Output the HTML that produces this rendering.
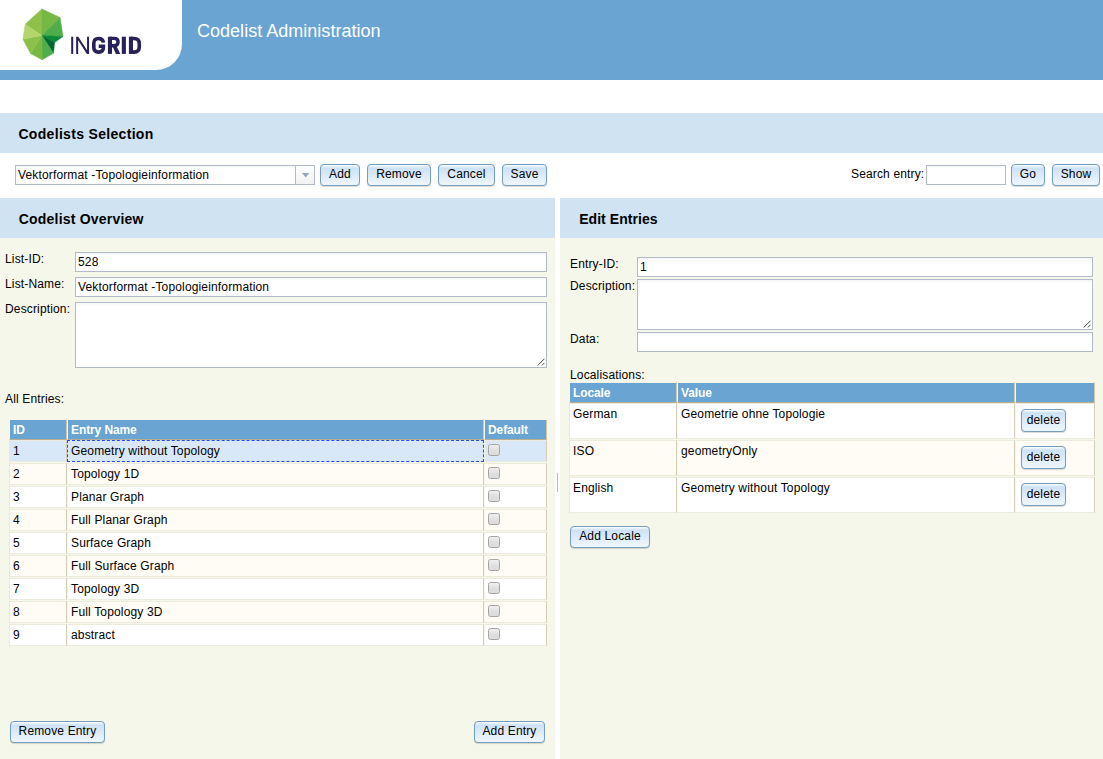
<!DOCTYPE html>
<html>
<head>
<meta charset="utf-8">
<title>Codelist Administration</title>
<style>
html,body{margin:0;padding:0;}
body{width:1103px;height:759px;overflow:hidden;background:#fff;position:relative;
  font-family:"Liberation Sans",sans-serif;font-size:12px;color:#000;line-height:14px;letter-spacing:.15px;}
.abs{position:absolute;}
.t{position:absolute;white-space:nowrap;line-height:14px;height:14px;}
#hdr{left:0;top:0;width:1103px;height:80px;background:#69a4d3;}
#logo{left:0;top:0;width:182px;height:70px;background:#fff;border-bottom-right-radius:26px;}
#title{left:197px;top:20px;letter-spacing:.02px;font-size:18px;line-height:22px;height:22px;color:#fff;}
.sec{position:absolute;background:#d0e3f2;height:40px;}
.sec span{position:absolute;left:18.4px;top:13px;font-weight:bold;font-size:14px;line-height:16px;letter-spacing:.32px;white-space:nowrap;}
.panel{position:absolute;background:#f5f7eb;}
.inp{position:absolute;box-sizing:border-box;border:1px solid #b3bac7;background:#fff linear-gradient(#f4f5f7 0,#fff 3px);
  padding:0 0 0 2px;line-height:18px;white-space:nowrap;overflow:hidden;}
.inp span{position:relative;top:0;}
.btn{position:absolute;box-sizing:border-box;height:22px;border:1px solid #759dc0;border-radius:4px;
  background:#bcd8f4 linear-gradient(#fff 0,rgba(255,255,255,.25) 3px,rgba(255,255,255,.78) 100%);
  box-shadow:0 1px 1px rgba(0,0,0,.15);text-align:center;line-height:14px;padding-top:2px;white-space:nowrap;}
/* grids */
.grid{position:absolute;}
.cell{position:absolute;box-sizing:border-box;border:1px solid;border-color:#ecebdc #d5cdb5 #ecebdc #f8f6ea;
  padding:3px 0 0 3px;line-height:14px;white-space:nowrap;overflow:hidden;}
.hc{background:#69a4d3;color:#fff;font-weight:bold;letter-spacing:-.1px;border-color:#fdf6e6 #d1c8ab #b9ae90 #fdf6e6;}
.row .cell:first-child{border-left-color:#e9e8d9;}
.row .hc:first-child{border-left-color:#fdf6e6;}
.r0 .cell{background:#fff;}
.r1 .cell{background:#fefcf4;}
.sel .cell{background:#d9e8f9;}
.row{position:absolute;left:0;}
.cb{position:absolute;left:3px;top:3px;width:12px;height:12px;box-sizing:border-box;border:1px solid #a4a4a4;border-radius:2.5px;
  background:linear-gradient(#efefef,#dedede 60%,#dcdcdc);box-shadow:0 0 1px rgba(255,255,255,.6);}
</style>
</head>
<body>
<!-- header -->
<div id="hdr" class="abs"></div>
<div id="logo" class="abs">
<svg class="abs" style="left:0;top:0" width="182" height="70" viewBox="0 0 182 70">
  <polygon points="25.2,24.2 41.8,8.9 41.8,35.5" fill="#8fc049" stroke="#8fc049" stroke-width="0.5" stroke-linejoin="round"/>
  <polygon points="41.8,8.9 60.1,17.5 41.8,35.5" fill="#75b843" stroke="#75b843" stroke-width="0.5" stroke-linejoin="round"/>
  <polygon points="60.1,17.5 63,36.4 41.8,35.5" fill="#50ae4a" stroke="#50ae4a" stroke-width="0.5" stroke-linejoin="round"/>
  <polygon points="63,36.4 54.6,42.6 41.8,35.5" fill="#0e8b3a" stroke="#0e8b3a" stroke-width="0.5" stroke-linejoin="round"/>
  <polygon points="54.6,42.6 53.4,53.3 41.8,35.5" fill="#00692f" stroke="#00692f" stroke-width="0.5" stroke-linejoin="round"/>
  <polygon points="53.4,53.3 42.1,59.8 41.8,35.5" fill="#50ae4a" stroke="#50ae4a" stroke-width="0.5" stroke-linejoin="round"/>
  <polygon points="42.1,59.8 30.5,53.5 41.8,35.5" fill="#79b943" stroke="#79b943" stroke-width="0.5" stroke-linejoin="round"/>
  <polygon points="30.5,53.5 22.9,39.2 41.8,35.5" fill="#8cc049" stroke="#8cc049" stroke-width="0.5" stroke-linejoin="round"/>
  <polygon points="22.9,39.2 25.2,24.2 41.8,35.5" fill="#b4d46d" stroke="#b4d46d" stroke-width="0.5" stroke-linejoin="round"/>
  <g fill="#29215a" stroke="none">
    <rect x="71.2" y="36.7" width="2" height="17.2"/>
    <polygon points="76.15,36.7 78.3,36.7 87.06,50.3 87.06,36.7 89.06,36.7 89.06,53.9 86.9,53.9 78.15,40.3 78.15,53.9 76.15,53.9"/>
    <rect x="107.9" y="36.7" width="4.1" height="17.2"/>
    <polygon points="112.6,46.2 116.6,46.2 120.3,53.9 115.9,53.9"/>
    <rect x="121.8" y="36.7" width="4.1" height="17.2"/>
    <rect x="128.9" y="36.7" width="4.1" height="17.2"/>
  </g>
  <g fill="none" stroke="#29215a" stroke-linejoin="miter">
    <path d="M103.4 42.6 C103.1 39.9 101.3 38.5 98.6 38.5 C95.5 38.5 93.8 40.4 93.8 43.3 L93.8 47.3 C93.8 50.2 95.5 52.1 98.6 52.1 C101.6 52.1 103.4 50.3 103.4 47.6 L103.4 46.2 L98.7 46.2" stroke-width="3.6"/>
    <path d="M110 38.4 L114 38.4 C116.8 38.4 118.1 39.9 118.1 42.1 C118.1 44.3 116.8 45.8 114 45.8 L110 45.8" stroke-width="3.4"/>
    <path d="M131 38.5 L134 38.5 C137.8 38.5 139.25 40.7 139.25 43.6 L139.25 47 C139.25 49.9 137.8 52.1 134 52.1 L131 52.1" stroke-width="3.6"/>
  </g>
</svg>
</div>
<div id="title" class="t">Codelist Administration</div>

<!-- codelists selection -->
<div class="sec" style="left:0;top:113px;width:1103px;"><span>Codelists Selection</span></div>

<div class="inp" style="left:15px;top:165px;width:300px;height:20px;"><span>Vektorformat -Topologieinformation</span>
  <div class="abs" style="right:0;top:0;width:18px;height:18px;border-left:1px solid #b3bac7;background:linear-gradient(#fff,#f1f1f1);"></div>
  <svg class="abs" style="left:286px;top:7px" width="8" height="5" viewBox="0 0 8 5"><polygon points="0,0 7.4,0 3.7,4.4" fill="#97a5c8"/></svg>
</div>
<div class="btn" style="left:320px;top:164px;width:40px;">Add</div>
<div class="btn" style="left:367px;top:164px;width:64px;">Remove</div>
<div class="btn" style="left:438px;top:164px;width:57px;">Cancel</div>
<div class="btn" style="left:502px;top:164px;width:45px;">Save</div>
<div class="t" style="left:851px;top:167px;">Search entry:</div>
<div class="inp" style="left:926px;top:165px;width:80px;height:20px;"></div>
<div class="btn" style="left:1011px;top:164px;width:34px;">Go</div>
<div class="btn" style="left:1052px;top:164px;width:48px;">Show</div>


<div class="sec" style="left:0;top:198px;width:555px;"><span style="letter-spacing:.2px;left:18.8px">Codelist Overview</span></div>
<div class="panel" style="left:0;top:238px;width:555px;height:521px;"></div>
<div class="t" style="left:5px;top:252px;">List-ID:</div>
<div class="inp" style="left:75px;top:252px;width:472px;height:20px;"><span>528</span></div>
<div class="t" style="left:5px;top:277px;">List-Name:</div>
<div class="inp" style="left:75px;top:277px;width:472px;height:20px;"><span>Vektorformat -Topologieinformation</span></div>
<div class="t" style="left:5px;top:302px;">Description:</div>
<div class="inp" style="left:75px;top:302px;width:472px;height:66px;">
  <svg class="abs" style="right:1px;bottom:1px" width="9" height="9" viewBox="0 0 9 9"><path d="M1.7 8.5 L8.5 1.7 M5.8 8.5 L8.5 5.8" stroke="#4a4a4a" stroke-width="1" fill="none"/></svg>
</div>
<div class="t" style="left:5px;top:392px;">All Entries:</div>

<div class="abs" style="left:9px;top:440px;width:1px;height:207px;background:#e9e8d9;"></div>
<div class="grid" style="left:9px;top:419px;width:538px;">
<div class="row" style="top:0;height:21px;"><div class="cell hc" style="left:0;width:58px;height:21px;">ID</div><div class="cell hc" style="left:58px;width:417px;height:21px;">Entry Name</div><div class="cell hc" style="left:475px;width:63px;height:21px;">Default</div></div>
<div class="row sel" style="top:21px;height:23px;"><div class="cell" style="left:0;width:58px;height:22px;">1</div><div class="cell" style="left:58px;width:417px;height:22px;border:1px dashed #2546ff;">Geometry without Topology</div><div class="cell" style="left:475px;width:63px;height:22px;"><div class="cb"></div></div></div>
<div class="row r1" style="top:44px;height:23px;"><div class="cell" style="left:0;width:58px;height:22px;">2</div><div class="cell" style="left:58px;width:417px;height:22px;">Topology 1D</div><div class="cell" style="left:475px;width:63px;height:22px;"><div class="cb"></div></div></div>
<div class="row r0" style="top:67px;height:23px;"><div class="cell" style="left:0;width:58px;height:22px;">3</div><div class="cell" style="left:58px;width:417px;height:22px;">Planar Graph</div><div class="cell" style="left:475px;width:63px;height:22px;"><div class="cb"></div></div></div>
<div class="row r1" style="top:90px;height:23px;"><div class="cell" style="left:0;width:58px;height:22px;">4</div><div class="cell" style="left:58px;width:417px;height:22px;">Full Planar Graph</div><div class="cell" style="left:475px;width:63px;height:22px;"><div class="cb"></div></div></div>
<div class="row r0" style="top:113px;height:23px;"><div class="cell" style="left:0;width:58px;height:22px;">5</div><div class="cell" style="left:58px;width:417px;height:22px;">Surface Graph</div><div class="cell" style="left:475px;width:63px;height:22px;"><div class="cb"></div></div></div>
<div class="row r1" style="top:136px;height:23px;"><div class="cell" style="left:0;width:58px;height:22px;">6</div><div class="cell" style="left:58px;width:417px;height:22px;">Full Surface Graph</div><div class="cell" style="left:475px;width:63px;height:22px;"><div class="cb"></div></div></div>
<div class="row r0" style="top:159px;height:23px;"><div class="cell" style="left:0;width:58px;height:22px;">7</div><div class="cell" style="left:58px;width:417px;height:22px;">Topology 3D</div><div class="cell" style="left:475px;width:63px;height:22px;"><div class="cb"></div></div></div>
<div class="row r1" style="top:182px;height:23px;"><div class="cell" style="left:0;width:58px;height:22px;">8</div><div class="cell" style="left:58px;width:417px;height:22px;">Full Topology 3D</div><div class="cell" style="left:475px;width:63px;height:22px;"><div class="cb"></div></div></div>
<div class="row r0" style="top:205px;height:23px;"><div class="cell" style="left:0;width:58px;height:22px;">9</div><div class="cell" style="left:58px;width:417px;height:22px;">abstract</div><div class="cell" style="left:475px;width:63px;height:22px;"><div class="cb"></div></div></div>
</div>

<div class="btn" style="left:10px;top:721px;width:95px;">Remove Entry</div>
<div class="btn" style="left:474px;top:721px;width:71px;">Add Entry</div>
<div class="abs" style="left:557px;top:473px;width:1px;height:19px;background:#b3b9d2;"></div>


<div class="sec" style="left:560px;top:198px;width:543px;"><span style="letter-spacing:.05px;left:19.2px">Edit Entries</span></div>
<div class="panel" style="left:560px;top:238px;width:543px;height:521px;"></div>
<div class="t" style="left:570px;top:257px;">Entry-ID:</div>
<div class="inp" style="left:637px;top:257px;width:456px;height:20px;"><span>1</span></div>
<div class="t" style="left:570px;top:279px;">Description:</div>
<div class="inp" style="left:637px;top:279px;width:456px;height:51px;">
  <svg class="abs" style="right:1px;bottom:1px" width="9" height="9" viewBox="0 0 9 9"><path d="M1.7 8.5 L8.5 1.7 M5.8 8.5 L8.5 5.8" stroke="#4a4a4a" stroke-width="1" fill="none"/></svg>
</div>
<div class="t" style="left:570px;top:332px;">Data:</div>
<div class="inp" style="left:637px;top:332px;width:456px;height:20px;"></div>
<div class="t" style="left:570px;top:368px;">Localisations:</div>

<div class="abs" style="left:569px;top:403px;width:1px;height:111px;background:#e9e8d9;"></div>
<div class="grid" style="left:569px;top:382px;width:526px;">
<div class="row" style="top:0;height:21px;"><div class="cell hc" style="left:0;width:108px;height:21px;">Locale</div><div class="cell hc" style="left:108px;width:338px;height:21px;">Value</div><div class="cell hc" style="left:446px;width:80px;height:21px;"></div></div>
<div class="row r0" style="top:21px;height:36px;"><div class="cell" style="left:0;width:108px;height:36px;">German</div><div class="cell" style="left:108px;width:338px;height:36px;">Geometrie ohne Topologie</div><div class="cell" style="left:446px;width:80px;height:36px;"><div class="btn" style="left:5px;top:5px;width:45px;height:23px;padding-top:3px;">delete</div></div></div>
<div class="row r1" style="top:58px;height:36px;"><div class="cell" style="left:0;width:108px;height:36px;">ISO</div><div class="cell" style="left:108px;width:338px;height:36px;">geometryOnly</div><div class="cell" style="left:446px;width:80px;height:36px;"><div class="btn" style="left:5px;top:5px;width:45px;height:23px;padding-top:3px;">delete</div></div></div>
<div class="row r0" style="top:95px;height:36px;"><div class="cell" style="left:0;width:108px;height:36px;">English</div><div class="cell" style="left:108px;width:338px;height:36px;">Geometry without Topology</div><div class="cell" style="left:446px;width:80px;height:36px;"><div class="btn" style="left:5px;top:5px;width:45px;height:23px;padding-top:3px;">delete</div></div></div>
</div>
<div class="btn" style="left:570px;top:526px;width:80px;">Add Locale</div>
</body>
</html>
